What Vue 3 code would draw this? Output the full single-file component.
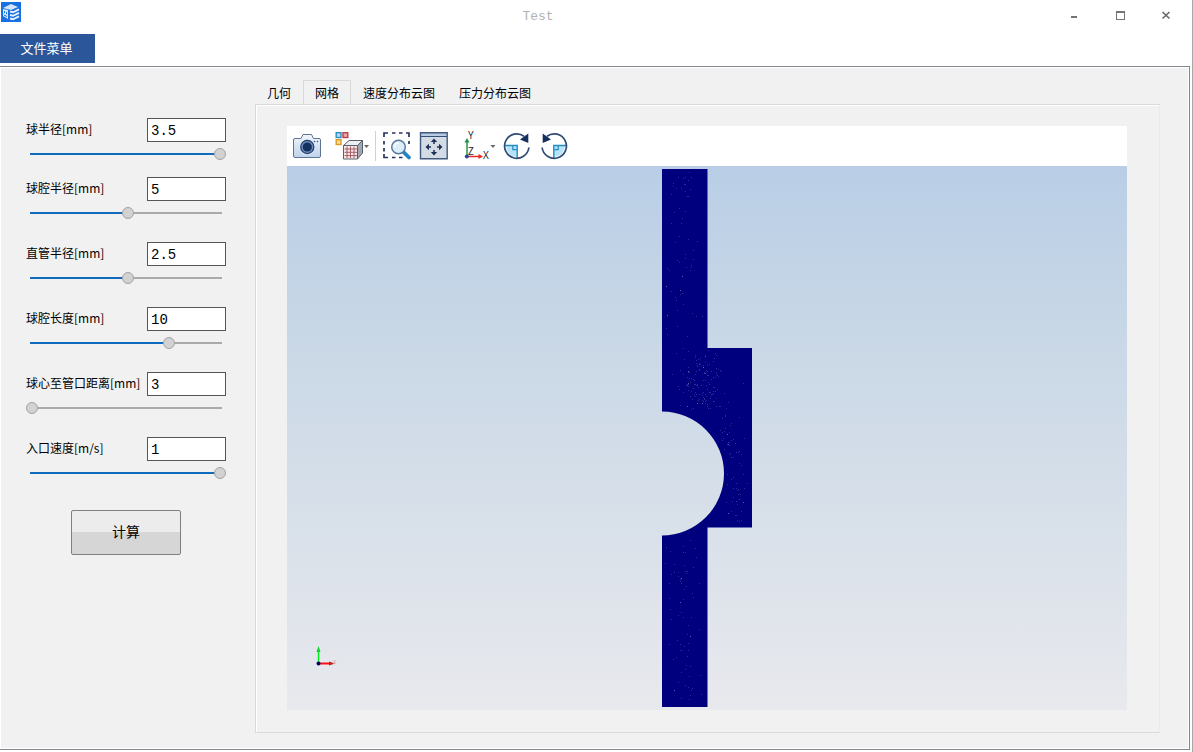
<script setup>
import { ref, reactive } from 'vue'

const params = reactive([
  { id: 'ball', label: '球半径[mm]', text: '3.5', pos: 100 },
  { id: 'cavity', label: '球腔半径[mm]', text: '5', pos: 51 },
  { id: 'pipe', label: '直管半径[mm]', text: '2.5', pos: 51 },
  { id: 'length', label: '球腔长度[mm]', text: '10', pos: 73 },
  { id: 'distance', label: '球心至管口距离[mm]', text: '3', pos: 0 },
  { id: 'speed', label: '入口速度[m/s]', text: '1', pos: 100 },
])

const tabs = ['几何', '网格', '速度分布云图', '压力分布云图']
const active = ref(1)

// Repeatable pseudo-random source for the mesh speckles
let seed = 17
function rand() {
  seed = (seed * 16807) % 2147483647
  return seed / 2147483647
}
function scatter(count, x, y, w, h) {
  return Array.from({ length: count }, () => ({
    x: Math.floor(x + ((rand() + rand()) / 2) * w),
    y: Math.floor(y + rand() * h),
  }))
}
// Speckles falling inside the ball are left out
const specks = [
  ...scatter(60, 376, 6, 42, 170),
  ...scatter(70, 384, 182, 50, 62),
  ...scatter(70, 396, 194, 44, 50),
  ...scatter(26, 420, 236, 30, 50),
  ...scatter(34, 438, 286, 24, 72),
  ...scatter(14, 424, 186, 38, 140),
  ...scatter(70, 376, 374, 42, 160),
].filter((s) => Math.hypot(s.x - 375, s.y - 307.5) > 64)
</script>

<template>
  <div class="window">
    <header class="titlebar">
      <svg class="logo" viewBox="0 0 20 20" aria-hidden="true">
        <rect width="20" height="20" fill="#176fe0" />
        <path d="M2 6 10 2l7 3-7 3-4-1z" fill="#d5e6fb" />
        <path d="M2 7l5 1v9l-5-3z" fill="#d5e6fb" />
        <path d="M3 9l1 .3v2L3 11zM5 10l1 .3v2L5 12zM3 12.500l3 1.500v1l-3-1.500z" fill="#176fe0" />
        <path d="M9 9.500l3 .8 6-3M9 13l3 .8 6-3M9 16.500l3 .8 6-3" fill="none" stroke="#e6f0fd" stroke-width="2" />
      </svg>
      <h1>Test</h1>
      <div class="controls">
        <button type="button" aria-label="最小化">
          <svg viewBox="0 0 12 12"><path d="M3 7h6v2H3z" fill="#747474" /></svg>
        </button>
        <button type="button" aria-label="最大化">
          <svg viewBox="0 0 12 12"><path d="M2 2h9v9H2zM3 4v6h7V4z" fill="#747474" fill-rule="evenodd" /></svg>
        </button>
        <button type="button" aria-label="关闭">
          <svg viewBox="0 0 12 12"><path d="M2.500 3l7 6.500M9.500 3l-7 6.500" stroke="#6c6c6c" stroke-width="1.700" /></svg>
        </button>
      </div>
    </header>

    <nav class="menubar"><button type="button">文件菜单</button></nav>

    <main class="body">
      <form class="sidebar" @submit.prevent>
        <div v-for="p in params" :key="p.id" class="param">
          <div class="field">
            <label :for="p.id">{{ p.label }}</label>
            <input :id="p.id" v-model="p.text" type="text" />
          </div>
          <input
            v-model="p.pos"
            class="slider"
            type="range"
            min="0"
            max="100"
            :aria-label="p.label"
            :style="{ '--fill': p.pos / 100 }"
          />
        </div>
        <button type="submit" class="calc">计算</button>
      </form>

      <section class="content">
        <div class="tabs" role="tablist">
          <button
            v-for="(t, i) in tabs"
            :key="t"
            type="button"
            role="tab"
            :aria-selected="i === active"
            :class="{ active: i === active }"
            @click="active = i"
          >{{ t }}</button>
        </div>

        <div class="pane">
          <div class="toolbar">
            <button type="button" aria-label="截图">
              <svg width="28" height="32" viewBox="0 0 28 32">
                <defs>
                  <linearGradient id="cam" x1="0" y1="0" x2="0" y2="1">
                    <stop offset="0" stop-color="#f2f6fb" /><stop offset="1" stop-color="#bdd3ea" />
                  </linearGradient>
                </defs>
                <path d="M2 8.500h6l2-4h8.500l2 4H26q1.500 0 1.500 1.500v16q0 1.500-1.500 1.500H2Q.5 27.500.5 26V10q0-1.500 1.500-1.500z" fill="url(#cam)" stroke="#5f7593" />
                <circle cx="14.300" cy="17" r="8" fill="#dde9f5" />
                <circle cx="14.300" cy="17" r="6.600" fill="#6f8fbd" stroke="#253d6b" stroke-width="1.200" />
                <circle cx="14.300" cy="17" r="4.600" fill="#14305f" />
                <circle cx="21.500" cy="11.500" r=".8" fill="#34517f" />
                <circle cx="24.500" cy="11.500" r=".8" fill="#34517f" />
              </svg>
            </button>
            <button type="button" class="apart" aria-label="网格显示">
              <svg width="34" height="32" viewBox="0 0 34 32">
                <rect x="1.200" y="2.700" width="4.800" height="4.800" fill="#a9e0f7" stroke="#2f8fc0" stroke-width="1.400" />
                <rect x="8" y="2.700" width="4.800" height="4.800" fill="#e9a5a8" stroke="#b9444b" stroke-width="1.400" />
                <rect x="1.200" y="9.700" width="4.800" height="4.800" fill="#fde08a" stroke="#d99a2b" stroke-width="1.400" />
                <path d="M8.500 15.500l5.500-5h13.500l-5 5z" fill="#eceef1" stroke="#56606d" />
                <path d="M22.500 15.500l5-5v12.500l-5 6z" fill="#a2a8b0" stroke="#56606d" />
                <path d="M8.500 15.500h14V29h-14z" fill="#f7e9ea" stroke="#56606d" />
                <path d="M12 16.500V28M15.500 16.500V28M19 16.500V28M9.500 19h12.500M9.500 22.300h12.500M9.500 25.600h12.500" stroke="#a75d64" />
                <path d="M29 15h5l-2.500 3z" fill="#666" />
              </svg>
            </button>
            <span class="separator"></span>
            <button type="button" aria-label="框选缩放">
              <svg width="30" height="32" viewBox="0 0 30 32">
                <path d="M2 7V3h4M10 3h3.500M17 3h3.500M24 3h3v4M27 11v3M2 11v3.500M2 18v3.500M2 24v3.500h4M10 27.500h3.500M17 27.500h3.500" fill="none" stroke="#26365b" stroke-width="1.700" />
                <path d="M21.500 22l5.500 5.500" stroke="#2484bf" stroke-width="3.800" stroke-linecap="round" />
                <circle cx="16.500" cy="17" r="6.800" fill="#dceefa" stroke="#54779c" stroke-width="1.400" />
                <path d="M12.500 17a4 4 0 0 1 4-4" fill="none" stroke="#fff" stroke-width="1.400" />
              </svg>
            </button>
            <button type="button" aria-label="适应窗口">
              <svg width="30" height="32" viewBox="0 0 30 32">
                <path d="M2.500 2.700h26.700v26H2.500z" fill="#d3dbe5" />
                <path d="M3 3h26v3H3z" fill="#b9cbe2" />
                <path d="M3 6.500h26" stroke="#344e78" />
                <path d="M2.500 2.700h26.700v26H2.500z" fill="none" stroke="#41597f" stroke-width="1.400" />
                <path d="M16 14v-3M16 20v3M13 17h-3M19 17h3" stroke="#1e3156" stroke-width="1.500" />
                <path d="M16 8.500l3.200 3.500h-6.400zM16 25.500l3.200-3.500h-6.400zM7.500 17l3.500-3.200v6.400zM24.500 17l-3.500-3.200v6.400z" fill="#1e3156" />
              </svg>
            </button>
            <button type="button" class="apart" aria-label="视图方向">
              <svg class="axes" width="34" height="32" viewBox="0 0 34 32">
                <path d="M5 26V12" stroke="#23964a" stroke-width="1.500" />
                <path d="M5 8l2.500 4.500h-5z" fill="#23964a" />
                <path d="M6 26.500h11" stroke="#e92b25" stroke-width="1.500" />
                <path d="M21 26.500L16.500 29v-5z" fill="#e92b25" />
                <circle cx="4.800" cy="26.500" r="2" fill="#2446a0" />
                <text x="6" y="9">Y</text><text x="6" y="25">Z</text><text x="21" y="29">X</text>
                <path d="M28.500 15h5L31 18z" fill="#666" />
              </svg>
            </button>
            <button type="button" aria-label="顺时针旋转">
              <svg width="30" height="32" viewBox="0 0 30 32">
                <g id="turn">
                  <path d="M4 15.500h11.200v11.500Q5 26 4 15.500z" fill="#b5e4fa" />
                  <path d="M3 15.500h12.200V28" fill="none" stroke="#258bc2" stroke-width="1.400" />
                  <path d="M10.800 16v3.700h4" fill="none" stroke="#258bc2" stroke-width="1.200" />
                  <path d="M22 6.200A12.200 12.200 0 1 0 26.900 17.500" fill="none" stroke="#2f4a75" stroke-width="1.700" />
                  <path d="M26.300 3.500v9.500L18 9.500z" fill="#15305c" />
                </g>
              </svg>
            </button>
            <button type="button" aria-label="逆时针旋转">
              <svg width="32" height="32" viewBox="0 0 32 32">
                <use href="#turn" transform="matrix(-1 0 0 1 31 0)" />
              </svg>
            </button>
          </div>

          <div class="viewport">
            <svg class="model" viewBox="0 0 840 544" role="img" aria-label="网格模型">
              <path d="M375 3H420.500V182H465V361.500H420.500V541H375V369.500A62 62 0 0 0 375 245.500Z" fill="#00007f" />
              <rect v-for="(s, i) in specks" :key="i" :x="s.x" :y="s.y" width="1" height="1" :fill="i % 17 ? '#2c2c94' : '#6060aa'" />
            </svg>
            <svg class="triad" width="26" height="24" viewBox="0 0 26 24" aria-hidden="true">
              <path d="M5.500 18V7" stroke="#00f020" stroke-width="1.500" />
              <path d="M5.500 1l2 6h-4z" fill="#16cf2a" />
              <path d="M7 18.500h11" stroke="#ff1010" stroke-width="2" />
              <path d="M22 18.500l-6 2v-4z" fill="#bd2424" />
              <path d="M20 15l3 4M23 15l-3 4" stroke="#f39b9b" stroke-width=".7" />
              <circle cx="5.500" cy="18.500" r="2" fill="#000060" />
            </svg>
          </div>
        </div>
      </section>
    </main>
  </div>
</template>

<style>
body {
  background: #fff;
}
</style>

<style scoped>
.window {
  display: flex;
  flex-direction: column;
  box-sizing: border-box;
  min-height: 100vh;
  padding: 0 2px 2px 0;
  border-right: 1px solid #a8a8a8;
  background: #fff;
  color: #000;
  font: 12px "Noto Sans CJK SC", sans-serif;
}
button {
  margin: 0;
  padding: 0;
  border: 0;
  background: none;
  color: inherit;
  font: inherit;
}
svg {
  display: block;
}
.titlebar {
  display: grid;
  grid-template-columns: 1fr auto 1fr;
  align-items: center;
  height: 34px;
}
.logo {
  align-self: start;
  width: 20px;
  height: 20px;
  margin: 2px 0 0 1px;
}
h1 {
  margin: 0 114px 0 0;
  color: #b2b2b2;
  font: 13px/32px "Liberation Mono", monospace;
}
.controls {
  display: flex;
  justify-content: flex-end;
  gap: 34px;
  padding: 0 18px 4px 0;
}
.controls svg {
  width: 12px;
  height: 12px;
}
.menubar {
  height: 32px;
}
.menubar button {
  width: 95px;
  height: 29px;
  padding: 0 2px 2px 0;
  background: #2b579a;
  color: #fff;
  font-size: 13px;
}
.body {
  display: flex;
  flex: 1;
  border: 1px solid #828790;
  border-left: 0;
  background: #f1f1f1;
  box-shadow: inset 0 0 0 1px #fff;
}
.sidebar {
  box-sizing: border-box;
  flex: none;
  width: 255px;
  padding: 51px 29px 0 26px;
}
.param {
  height: 65px;
}
.param:first-child {
  height: 59px;
}
.field {
  display: flex;
  justify-content: space-between;
  height: 24px;
}
.field label {
  line-height: 22px;
  white-space: nowrap;
}
.field input {
  box-sizing: border-box;
  width: 79px;
  height: 24px;
  padding: 2px 3px 0;
  border: 1px solid #555;
  border-radius: 0;
  background: #fff;
  color: #000;
  font: 14px "Liberation Mono", monospace;
}
.slider {
  display: block;
  appearance: none;
  width: 100%;
  height: 12px;
  margin: 6px 0 0;
  background:
    linear-gradient(#0f6cbd, #0f6cbd) 4px 5px / calc((100% - 12px) * var(--fill)) 2px no-repeat,
    linear-gradient(#aaa, #aaa) 4px 5px / calc(100% - 8px) 2px no-repeat;
}
.slider::-webkit-slider-thumb {
  appearance: none;
  box-sizing: border-box;
  width: 12px;
  height: 12px;
  border: 1px solid #a3a3a3;
  border-radius: 50%;
  background: #d2d2d2;
}
.calc {
  display: block;
  width: 110px;
  height: 45px;
  margin: 8px 0 0 45px;
  padding-bottom: 3px;
  border: 1px solid #808080;
  border-radius: 2px;
  background: linear-gradient(#ececec 50%, #d6d6d6 50%);
  font-size: 14px;
}
.content {
  display: flex;
  flex: 1;
  flex-direction: column;
  min-width: 0;
  padding: 13px 29px 16px 0;
}
.tabs {
  display: flex;
  height: 24px;
}
.tabs button {
  padding: 0 11px;
  border: 1px solid transparent;
  border-bottom: 0;
  white-space: nowrap;
}
.tabs .active {
  border-color: #d9d9d9;
}
.pane {
  display: flex;
  flex: 1;
  flex-direction: column;
  padding: 21px 32px 22px 31px;
  border: 1px solid #d9d9d9;
  border-right-color: #ebebeb;
  box-shadow: inset 1px 1px 0 #fff;
}
.toolbar {
  display: flex;
  align-items: center;
  gap: 6px;
  height: 40px;
  padding: 0 6px;
  background: #fff;
}
.toolbar .apart {
  margin-left: 8px;
}
.separator {
  width: 1px;
  height: 30px;
  background: #d2d2d2;
}
.axes {
  overflow: visible;
}
.axes text {
  fill: #222;
  font: 10px "Open Sans", sans-serif;
}
.viewport {
  position: relative;
  display: flex;
  flex: 1;
  background: linear-gradient(#b9cee6, #c8d7e6 30%, #e8e9ed);
}
.model {
  width: 100%;
  height: auto;
}
.triad {
  position: absolute;
  bottom: 41px;
  left: 26px;
}
</style>
